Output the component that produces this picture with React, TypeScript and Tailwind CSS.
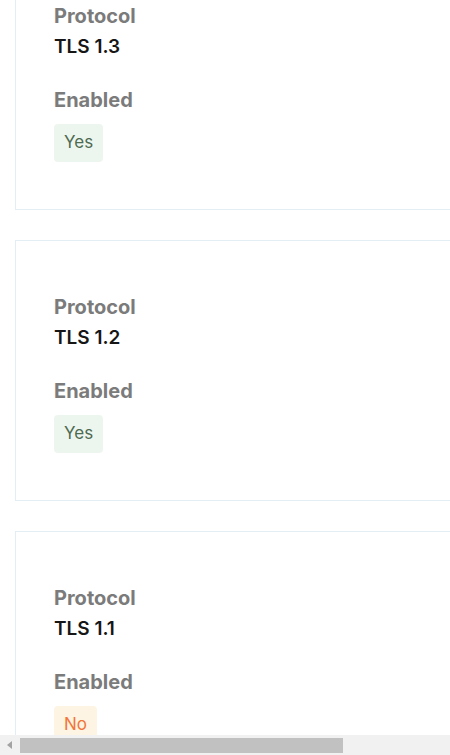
const protocols = [
  { name: "TLS 1.3", enabled: true },
  { name: "TLS 1.2", enabled: true },
  { name: "TLS 1.1", enabled: false },
];

function ProtocolCard({ name, enabled }: { name: string; enabled: boolean }) {
  return (
    <div className="w-[720px] shrink-0 border border-[#e2edf4] bg-white pt-[54px] pb-[47px] pl-[38px]">
      <p className="text-[20px] leading-6 font-bold text-[#7b7b7b]">Protocol</p>
      <p className="mt-[7px] text-[19px] leading-6 font-semibold text-[#161616]">{name}</p>

      <p className="mt-[29px] text-[20px] leading-6 font-bold text-[#7b7b7b]">Enabled</p>
      <div className="mt-3 flex">
        {enabled ? (
          <span className="flex h-[38px] items-center rounded-[4px] bg-[#edf6ee] px-[10px] text-[17px] text-[#4d6a52]">
            Yes
          </span>
        ) : (
          <span className="flex h-[38px] items-center rounded-[4px] bg-[#fdf4e4] px-[10px] text-[17px] text-[#f2763a]">
            No
          </span>
        )}
      </div>
    </div>
  );
}

export default function App() {
  return (
    <div className="flex h-[755px] w-[450px] flex-col overflow-hidden bg-white font-['Inter',sans-serif]">
      <div className="flex-1 overflow-hidden pl-[15px]">
        <div className="mt-[-51px] flex flex-col gap-[30px]">
          {protocols.map((p) => (
            <ProtocolCard key={p.name} name={p.name} enabled={p.enabled} />
          ))}
        </div>
      </div>

      {/* horizontal scrollbar */}
      <div className="flex h-5 shrink-0 items-center bg-[#f1f1f1]">
        <div className="flex w-5 items-center justify-center">
          <svg width="6" height="8" viewBox="0 0 6 8">
            <path d="M5 0 L0 4 L5 8 Z" fill="#a3a3a3" />
          </svg>
        </div>
        <div className="h-[15px] w-[323px] bg-[#c1c1c1]" />
      </div>
    </div>
  );
}
